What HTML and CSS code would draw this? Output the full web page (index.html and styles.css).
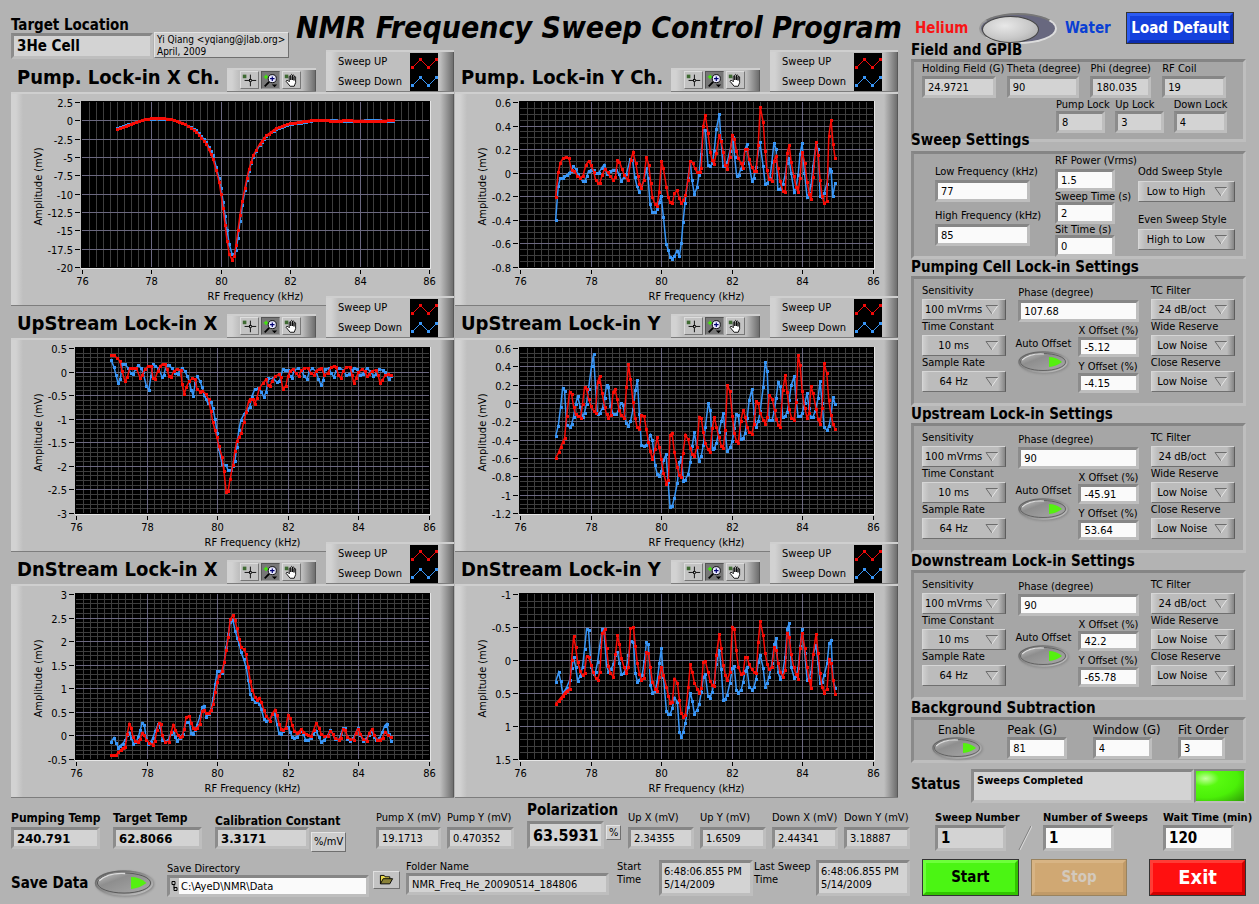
FILE: index.html
```html
<!DOCTYPE html>
<html lang="en">
<head>
<meta charset="utf-8">
<title>NMR Frequency Sweep Control Program</title>
<link rel="stylesheet" href="styles.css">
</head>
<body>
<svg class="defs" width="0" height="0" aria-hidden="true">
  <defs>
    <linearGradient id="ledFace" x1="0" y1="0" x2="1" y2="1">
      <stop offset="0" stop-color="#c4c4c4"/><stop offset=".35" stop-color="#8e8e8e"/><stop offset="1" stop-color="#a8a8a8"/>
    </linearGradient>
    <linearGradient id="ledRim" x1="0" y1="0" x2="1" y2="1">
      <stop offset="0" stop-color="#555"/><stop offset="1" stop-color="#c8c8c8"/>
    </linearGradient>
  </defs>
  <symbol id="i-cross" viewBox="0 0 19 16">
    <rect x="2" y="2" width="4" height="4" fill="#3f6a33"/>
    <path d="M10.5 2v5M10.5 10v5M4 8.500h5M12 8.500h5" stroke="#000" fill="none"/>
    <rect x="9.500" y="7.500" width="2" height="2" fill="#fff" stroke="#000"/>
  </symbol>
  <symbol id="i-zoom" viewBox="0 0 19 16">
    <path d="M4.500 2v5M2 4.500h5" stroke="#3df000" stroke-width="1.500"/>
    <circle cx="11.500" cy="6.500" r="4.500" fill="#e8e8ff" stroke="#000"/>
    <path d="M11.500 4v5M9 6.500h5" stroke="#000070" stroke-width="1.300"/>
    <path d="M8 10l-5 5" stroke="#000" stroke-width="2"/>
    <path d="M11 13h6l-3 3z" fill="#000"/>
  </symbol>
  <symbol id="i-hand" viewBox="0 0 19 16">
    <rect x="2" y="2" width="4" height="4" fill="#3f6a33"/>
    <path d="M8 15L3.500 9.500q0-1.500 2-1L7 10V4q.8-1.500 1.700 0v4V2.500q.9-1.500 1.800 0V8V3q.9-1.300 1.800 0v5.500V4.500q.9-1.200 1.800 0V11L12.500 15z" fill="#fff" stroke="#000"/>
  </symbol>
  <symbol id="i-tri" viewBox="0 0 14 10">
    <path d="M13 .5H1L7 9" fill="none" stroke="#6c6c6c"/>
    <path d="M7 9L13 .5" fill="none" stroke="#e6e6e6"/>
  </symbol>
  <symbol id="i-trace" viewBox="0 0 28 16">
    <path d="M2.500 12.500L10.500 4.500L18.500 12.500L26.500 4.500" fill="none" stroke="currentColor"/>
    <path d="M1 11h3v3H1zM9 3h3v3H9zM17 11h3v3h-3zM25 3h3v3h-3z" fill="currentColor"/>
  </symbol>
  <symbol id="i-led" viewBox="0 0 50 22">
    <ellipse cx="25" cy="11" rx="24" ry="10" fill="#999" stroke="url(#ledRim)" stroke-width="1.500"/>
    <ellipse cx="25" cy="11" rx="22.500" ry="8.500" fill="url(#ledFace)" stroke="#4a4a4a" stroke-width=".7"/>
    <path d="M4 9Q12 2 26 3" stroke="#ddd" stroke-width="1.200" fill="none"/>
    <path d="M31 6Q38 6 44 11Q38 15.500 31 16z" fill="#55f010"/>
  </symbol>
</svg>

<main class="page">
  <div class="left">
    <header class="banner">
      <div class="field target">
        <label class="big" for="target">Target Location</label>
        <input id="target" class="ind strong" value="3He Cell" readonly>
      </div>
      <p class="author">Yi Qiang &lt;yqiang@jlab.org&gt;<br>April, 2009</p>
      <h1>NMR Frequency Sweep Control Program</h1>
    </header>

    <div class="charts">
      <section class="chart">
        <div class="chart-head">
          <h2>Pump. Lock-in X Ch.</h2>
          <div class="palette"><button aria-label="Cursor"><svg><use href="#i-cross"/></svg></button><button class="on" aria-label="Zoom"><svg><use href="#i-zoom"/></svg></button><button aria-label="Pan"><svg><use href="#i-hand"/></svg></button></div>
          <div class="legend"><span>Sweep UP</span><span>Sweep Down</span><div class="keys"><svg class="up"><use href="#i-trace"/></svg><svg class="down"><use href="#i-trace"/></svg></div></div>
        </div>
        <div class="plot" data-chart="pumpX"></div>
      </section>
      <section class="chart">
        <div class="chart-head">
          <h2>Pump. Lock-in Y Ch.</h2>
          <div class="palette"><button aria-label="Cursor"><svg><use href="#i-cross"/></svg></button><button class="on" aria-label="Zoom"><svg><use href="#i-zoom"/></svg></button><button aria-label="Pan"><svg><use href="#i-hand"/></svg></button></div>
          <div class="legend"><span>Sweep UP</span><span>Sweep Down</span><div class="keys"><svg class="up"><use href="#i-trace"/></svg><svg class="down"><use href="#i-trace"/></svg></div></div>
        </div>
        <div class="plot" data-chart="pumpY"></div>
      </section>
      <section class="chart">
        <div class="chart-head">
          <h2>UpStream Lock-in X</h2>
          <div class="palette"><button aria-label="Cursor"><svg><use href="#i-cross"/></svg></button><button class="on" aria-label="Zoom"><svg><use href="#i-zoom"/></svg></button><button aria-label="Pan"><svg><use href="#i-hand"/></svg></button></div>
          <div class="legend"><span>Sweep UP</span><span>Sweep Down</span><div class="keys"><svg class="up"><use href="#i-trace"/></svg><svg class="down"><use href="#i-trace"/></svg></div></div>
        </div>
        <div class="plot" data-chart="upX"></div>
      </section>
      <section class="chart">
        <div class="chart-head">
          <h2>UpStream Lock-in Y</h2>
          <div class="palette"><button aria-label="Cursor"><svg><use href="#i-cross"/></svg></button><button class="on" aria-label="Zoom"><svg><use href="#i-zoom"/></svg></button><button aria-label="Pan"><svg><use href="#i-hand"/></svg></button></div>
          <div class="legend"><span>Sweep UP</span><span>Sweep Down</span><div class="keys"><svg class="up"><use href="#i-trace"/></svg><svg class="down"><use href="#i-trace"/></svg></div></div>
        </div>
        <div class="plot" data-chart="upY"></div>
      </section>
      <section class="chart">
        <div class="chart-head">
          <h2>DnStream Lock-in X</h2>
          <div class="palette"><button aria-label="Cursor"><svg><use href="#i-cross"/></svg></button><button class="on" aria-label="Zoom"><svg><use href="#i-zoom"/></svg></button><button aria-label="Pan"><svg><use href="#i-hand"/></svg></button></div>
          <div class="legend"><span>Sweep UP</span><span>Sweep Down</span><div class="keys"><svg class="up"><use href="#i-trace"/></svg><svg class="down"><use href="#i-trace"/></svg></div></div>
        </div>
        <div class="plot" data-chart="dnX"></div>
      </section>
      <section class="chart">
        <div class="chart-head">
          <h2>DnStream Lock-in Y</h2>
          <div class="palette"><button aria-label="Cursor"><svg><use href="#i-cross"/></svg></button><button class="on" aria-label="Zoom"><svg><use href="#i-zoom"/></svg></button><button aria-label="Pan"><svg><use href="#i-hand"/></svg></button></div>
          <div class="legend"><span>Sweep UP</span><span>Sweep Down</span><div class="keys"><svg class="up"><use href="#i-trace"/></svg><svg class="down"><use href="#i-trace"/></svg></div></div>
        </div>
        <div class="plot" data-chart="dnY"></div>
      </section>
    </div>

    <div class="readouts">
      <div class="field"><label class="mid" for="ptemp">Pumping Temp</label><input id="ptemp" class="ind semi" value="240.791" readonly></div>
      <div class="field"><label class="mid" for="ttemp">Target Temp</label><input id="ttemp" class="ind semi" value="62.8066" readonly></div>
      <div class="with-unit calib">
        <div class="field"><label class="mid" for="calib">Calibration Constant</label><input id="calib" class="ind semi" value="3.3171" readonly></div>
        <span class="unit low">%/mV</span>
      </div>
      <div class="field"><label for="px">Pump X (mV)</label><input id="px" class="ind" value="19.1713" readonly></div>
      <div class="field"><label for="py">Pump Y (mV)</label><input id="py" class="ind" value="0.470352" readonly></div>
      <div class="with-unit polar">
        <div class="field"><label class="big" for="pol">Polarization</label><input id="pol" class="ind huge" value="63.5931" readonly></div>
        <span class="unit">%</span>
      </div>
      <div class="field"><label for="ux">Up X (mV)</label><input id="ux" class="ind" value="2.34355" readonly></div>
      <div class="field"><label for="uy">Up Y (mV)</label><input id="uy" class="ind" value="1.6509" readonly></div>
      <div class="field"><label for="dx">Down X (mV)</label><input id="dx" class="ind" value="2.44341" readonly></div>
      <div class="field"><label for="dy">Down Y (mV)</label><input id="dy" class="ind" value="3.18887" readonly></div>
    </div>

    <div class="saving">
      <div class="save-switch"><span class="big" id="saveLbl">Save Data</span><button class="led large" aria-labelledby="saveLbl" aria-pressed="true"><svg><use href="#i-led"/></svg></button></div>
      <div class="save-dir">
        <div class="field"><label for="dir">Save Directory</label>
          <div class="path"><svg class="path-mark" viewBox="0 0 6 10"><path d="M.5 .5h3v3h-3zM2.500 4v3h1M2.500 6.500h3v3h-3z" fill="none" stroke="#000"/></svg><input id="dir" value="C:\AyeD\NMR\Data"></div>
        </div>
        <button class="browse" aria-label="Browse"><svg viewBox="0 0 16 12"><path d="M1.500 10.500v-9h4l1 1.500h5v2" fill="#e8d84a" stroke="#000"/><path d="M1.500 10.500l3-5.500h10l-3 5.500z" fill="#8a8238" stroke="#000"/></svg></button>
      </div>
      <div class="field folder"><label for="folder">Folder Name</label><input id="folder" class="ind" value="NMR_Freq_He_20090514_184806" readonly></div>
      <div class="stamp"><span>Start<br>Time</span><output>6:48:06.855 PM<br>5/14/2009</output></div>
      <div class="stamp last"><span>Last Sweep<br>Time</span><output>6:48:06.855 PM<br>5/14/2009</output></div>
    </div>
  </div>

  <div class="right">
    <div class="topbar">
      <label class="big he" for="gas">Helium</label>
      <input id="gas" class="toggle" type="checkbox">
      <label class="big wa" for="gas">Water</label>
      <button class="btn blue">Load Default</button>
    </div>

    <section class="group gpib">
      <h3>Field and GPIB</h3>
      <div class="panel">
        <div class="row first">
          <div class="field"><label for="hf">Holding Field (G)</label><input id="hf" class="ind" value="24.9721" readonly></div>
          <div class="field"><label for="th">Theta (degree)</label><input id="th" class="ind" value="90" readonly></div>
          <div class="field"><label for="ph">Phi (degree)</label><input id="ph" class="ind" value="180.035" readonly></div>
          <div class="field"><label for="rf">RF Coil</label><input id="rf" class="ind" value="19" readonly></div>
        </div>
        <div class="row second">
          <div class="field"><label for="pl">Pump Lock</label><input id="pl" class="ind" value="8" readonly></div>
          <div class="field"><label for="ul">Up Lock</label><input id="ul" class="ind" value="3" readonly></div>
          <div class="field"><label for="dl">Down Lock</label><input id="dl" class="ind" value="4" readonly></div>
        </div>
      </div>
    </section>

    <section class="group sweep">
      <h3>Sweep Settings</h3>
      <div class="panel">
        <div class="col freq">
          <div class="field"><label for="lf">Low Frequency (kHz)</label><input id="lf" value="77"></div>
          <div class="field"><label for="hfq">High Frequency (kHz)</label><input id="hfq" value="85"></div>
        </div>
        <div class="col times">
          <div class="field"><label for="rp">RF Power (Vrms)</label><input id="rp" value="1.5"></div>
          <div class="field"><label for="st">Sweep Time (s)</label><input id="st" value="2"></div>
          <div class="field"><label for="si">Sit Time (s)</label><input id="si" value="0"></div>
        </div>
        <div class="col styles">
          <div class="field"><label for="os">Odd Sweep Style</label><span class="pick"><select id="os"><option>Low to High</option></select><svg><use href="#i-tri"/></svg></span></div>
          <div class="field"><label for="es">Even Sweep Style</label><span class="pick"><select id="es"><option>High to Low</option></select><svg><use href="#i-tri"/></svg></span></div>
        </div>
      </div>
    </section>

    <section class="group lockin">
      <h3>Pumping Cell Lock-in Settings</h3>
      <div class="panel">
        <div class="col">
          <div class="field"><label for="p1">Sensitivity</label><span class="pick"><select id="p1"><option>100 mVrms</option></select><svg><use href="#i-tri"/></svg></span></div>
          <div class="field"><label for="p2">Time Constant</label><span class="pick"><select id="p2"><option>10 ms</option></select><svg><use href="#i-tri"/></svg></span></div>
          <div class="field"><label for="p3">Sample Rate</label><span class="pick"><select id="p3"><option>64 Hz</option></select><svg><use href="#i-tri"/></svg></span></div>
        </div>
        <div class="middle">
          <div class="field phase"><label for="p4">Phase (degree)</label><input id="p4" value="107.68"></div>
          <div class="auto"><span id="pa">Auto Offset</span><button class="led" aria-labelledby="pa" aria-pressed="true"><svg><use href="#i-led"/></svg></button></div>
          <div class="offsets">
            <div class="field"><label for="p5">X Offset (%)</label><input id="p5" value="-5.12"></div>
            <div class="field"><label for="p6">Y Offset (%)</label><input id="p6" value="-4.15"></div>
          </div>
        </div>
        <div class="col">
          <div class="field"><label for="p7">TC Filter</label><span class="pick"><select id="p7"><option>24 dB/oct</option></select><svg><use href="#i-tri"/></svg></span></div>
          <div class="field"><label for="p8">Wide Reserve</label><span class="pick"><select id="p8"><option>Low Noise</option></select><svg><use href="#i-tri"/></svg></span></div>
          <div class="field"><label for="p9">Close Reserve</label><span class="pick"><select id="p9"><option>Low Noise</option></select><svg><use href="#i-tri"/></svg></span></div>
        </div>
      </div>
    </section>

    <section class="group lockin">
      <h3>Upstream Lock-in Settings</h3>
      <div class="panel">
        <div class="col">
          <div class="field"><label for="u1">Sensitivity</label><span class="pick"><select id="u1"><option>100 mVrms</option></select><svg><use href="#i-tri"/></svg></span></div>
          <div class="field"><label for="u2">Time Constant</label><span class="pick"><select id="u2"><option>10 ms</option></select><svg><use href="#i-tri"/></svg></span></div>
          <div class="field"><label for="u3">Sample Rate</label><span class="pick"><select id="u3"><option>64 Hz</option></select><svg><use href="#i-tri"/></svg></span></div>
        </div>
        <div class="middle">
          <div class="field phase"><label for="u4">Phase (degree)</label><input id="u4" value="90"></div>
          <div class="auto"><span id="ua">Auto Offset</span><button class="led" aria-labelledby="ua" aria-pressed="true"><svg><use href="#i-led"/></svg></button></div>
          <div class="offsets">
            <div class="field"><label for="u5">X Offset (%)</label><input id="u5" value="-45.91"></div>
            <div class="field"><label for="u6">Y Offset (%)</label><input id="u6" value="53.64"></div>
          </div>
        </div>
        <div class="col">
          <div class="field"><label for="u7">TC Filter</label><span class="pick"><select id="u7"><option>24 dB/oct</option></select><svg><use href="#i-tri"/></svg></span></div>
          <div class="field"><label for="u8">Wide Reserve</label><span class="pick"><select id="u8"><option>Low Noise</option></select><svg><use href="#i-tri"/></svg></span></div>
          <div class="field"><label for="u9">Close Reserve</label><span class="pick"><select id="u9"><option>Low Noise</option></select><svg><use href="#i-tri"/></svg></span></div>
        </div>
      </div>
    </section>

    <section class="group lockin">
      <h3>Downstream Lock-in Settings</h3>
      <div class="panel">
        <div class="col">
          <div class="field"><label for="d1">Sensitivity</label><span class="pick"><select id="d1"><option>100 mVrms</option></select><svg><use href="#i-tri"/></svg></span></div>
          <div class="field"><label for="d2">Time Constant</label><span class="pick"><select id="d2"><option>10 ms</option></select><svg><use href="#i-tri"/></svg></span></div>
          <div class="field"><label for="d3">Sample Rate</label><span class="pick"><select id="d3"><option>64 Hz</option></select><svg><use href="#i-tri"/></svg></span></div>
        </div>
        <div class="middle">
          <div class="field phase"><label for="d4">Phase (degree)</label><input id="d4" value="90"></div>
          <div class="auto"><span id="da">Auto Offset</span><button class="led" aria-labelledby="da" aria-pressed="true"><svg><use href="#i-led"/></svg></button></div>
          <div class="offsets">
            <div class="field"><label for="d5">X Offset (%)</label><input id="d5" value="42.2"></div>
            <div class="field"><label for="d6">Y Offset (%)</label><input id="d6" value="-65.78"></div>
          </div>
        </div>
        <div class="col">
          <div class="field"><label for="d7">TC Filter</label><span class="pick"><select id="d7"><option>24 dB/oct</option></select><svg><use href="#i-tri"/></svg></span></div>
          <div class="field"><label for="d8">Wide Reserve</label><span class="pick"><select id="d8"><option>Low Noise</option></select><svg><use href="#i-tri"/></svg></span></div>
          <div class="field"><label for="d9">Close Reserve</label><span class="pick"><select id="d9"><option>Low Noise</option></select><svg><use href="#i-tri"/></svg></span></div>
        </div>
      </div>
    </section>

    <section class="group backg">
      <h3>Background Subtraction</h3>
      <div class="panel">
        <div class="auto"><span id="en" class="enable">Enable</span><button class="led" aria-labelledby="en" aria-pressed="true"><svg><use href="#i-led"/></svg></button></div>
        <div class="field"><label class="wide" for="pk">Peak (G)</label><input id="pk" value="81"></div>
        <div class="field"><label class="wide" for="wi">Window (G)</label><input id="wi" value="4"></div>
        <div class="field"><label class="wide" for="fo">Fit Order</label><input id="fo" value="3"></div>
      </div>
    </section>

    <div class="status">
      <label class="big" for="stat">Status</label>
      <output id="stat">Sweeps Completed</output>
      <span class="lamp"></span>
    </div>

    <div class="counts">
      <div class="field"><label class="bold" for="sn">Sweep Number</label><input id="sn" class="ind strong" value="1" readonly></div>
      <svg class="slash" viewBox="0 0 14 26"><path d="M1 25L13 1" stroke="#777"/><path d="M2 25L14 1" stroke="#ddd"/></svg>
      <div class="field"><label class="bold" for="ns">Number of Sweeps</label><input id="ns" class="strong" value="1"></div>
      <div class="field wait"><label class="bold" for="wt">Wait Time (min)</label><input id="wt" class="strong" value="120"></div>
    </div>

    <div class="actions">
      <button class="btn green">Start</button>
      <button class="btn tan" disabled>Stop</button>
      <button class="btn red">Exit</button>
    </div>
  </div>
</main>
<script src="charts.js"></script>
</body>
</html>
```
FILE: styles.css
```css
* { box-sizing: border-box; }
body {
  margin: 0;
  background: #b3b3b3;
  color: #000;
  font: 11px/15px "DejaVu Sans Condensed", "Noto Sans", sans-serif;
}
h1, h2, h3, p { margin: 0; }
h1, h2, h3, label, span { white-space: nowrap; }
input, select, button { font: inherit; color: inherit; margin: 0; border-radius: 0; }
button { padding: 0; cursor: pointer; }
svg { display: block; }
.defs { position: absolute; }

.page {
  display: grid;
  grid-template-columns: minmax(0, 910fr) minmax(0, 349fr);
  min-height: 100vh;
}
.left { padding-left: 11px; min-width: 0; }
.right { padding: 12px 13px 0 1px; min-width: 0; }

/* fields */
.field { display: flex; flex-direction: column; min-width: 0; }
.field input, .path, .stamp output, .status output {
  flex: none;
  width: 100%;
  height: 22px;
  padding: 0 0 0 3px;
  background: #fafafa;
  border: 3px solid;
  border-color: #868686 #bebebe #bebebe #8c8c8c;
  outline: 0;
}
.field input.ind, .stamp output, .status output { background: #d3d3d3; }
.field input.strong { font-size: 15px; font-weight: bold; height: 26px; }
.field input.semi { font-size: 13px; font-weight: bold; }
.field input.huge { font-size: 16px; font-weight: bold; height: 28px; }
.big { font-size: 15px; font-weight: bold; line-height: 18px; }
.mid { font-size: 12px; font-weight: bold; line-height: 16px; }
.bold { font-weight: bold; }
.wide { font-size: 13px; }

/* banner */
.banner { display: flex; height: 50px; padding-top: 16px; }
.target { flex: 0 0 142px; }
.target label { height: 17px; }
.author {
  flex: 0 0 135px;
  height: 26px;
  margin: 16px 0 0 1px;
  padding: 1px 2px;
  border: 1px solid;
  border-color: #e4e4e4 #6f6f6f #6f6f6f #e4e4e4;
  background: #cdcdcd;
  font-size: 10px;
  line-height: 12px;
  white-space: nowrap;
}
h1 { flex: 1; margin: -5px 0 0 7px; font-size: 30px; line-height: 34px; font-style: italic; }

/* charts */
.charts {
  display: grid;
  grid-template-columns: repeat(2, minmax(0, 1fr));
  gap: 0 1px;
  margin-right: 12px;
}
.chart { margin-bottom: -10px; }
.chart-head { display: flex; height: 42px; align-items: flex-end; }
.chart-head h2 { flex: 1; padding-left: 6px; font-size: 20px; line-height: 30px; }
.palette, .legend, .plot {
  background: linear-gradient(to right, #d2d2d2 0, #d2d2d2 5px, #bfbfbf 12px, #bfbfbf calc(100% - 14px), #6e6e6e calc(100% - 1px), #444 100%);
  border-top: 2px solid #cfcfcf;
  border-bottom: 1px solid #7d7d7d;
}
.palette { display: flex; flex: 0 0 89px; height: 24px; padding: 1px 0 0 13px; gap: 2px; }
.palette button {
  width: 19px;
  height: 18px;
  border: 1px solid;
  border-color: #ddd #777 #777 #ddd;
  background: #c3c3c3;
}
.palette button.on { background: #777; border-color: #555 #999 #999 #555; }
.palette svg { width: 17px; height: 16px; }
.legend {
  display: grid;
  flex: 0 0 128px;
  grid-template-columns: 1fr 28px;
  height: 42px;
  margin-left: 10px;
  padding: 0 16px 0 12px;
  align-items: center;
}
.keys { grid-column: 2; grid-row: 1 / span 2; background: #000; height: 38px; padding: 1px 0; }
.keys svg { width: 28px; height: 18px; }
.up { color: #f00a0a; }
.down { color: #3996f7; }
.plot { height: 214px; }
.plot text { font-size: 11px; fill: #000; }

/* readouts */
.readouts {
  display: grid;
  grid-template-columns: 102fr 102fr 161fr 71fr 80fr 101fr 72fr 72fr 72fr 66fr;
  align-items: end;
  margin-top: 12px;
  height: 49px;
}
.readouts > .field { padding-right: 6px; }
.readouts > .field:nth-child(-n+2), .readouts > .field:nth-child(5) { padding-right: 13px; }
.readouts > .field:last-child { padding-right: 0; }
.readouts > .field label { height: 17px; }
.readouts .calib label { line-height: 12px; }
.with-unit { display: flex; gap: 2px; }
.calib .field { flex: 0 0 94px; }
.polar .field { flex: 0 0 77px; }
.polar label { height: 20px; }
.unit {
  align-self: center;
  margin-top: 14px;
  padding: 0 2px;
  border: 1px solid;
  border-color: #e4e4e4 #6f6f6f #6f6f6f #e4e4e4;
  background: #cdcdcd;
  line-height: 13px;
}
.unit.low { align-self: flex-end; margin-bottom: -3px; line-height: 18px; }

.saving {
  display: grid;
  grid-template-columns: 156fr 239fr 211fr 136fr 157fr;
  margin-top: 11px;
  height: 37px;
}
.save-switch { display: flex; align-items: center; gap: 6px; padding-top: 9px; }
.save-dir { display: flex; gap: 4px; align-items: flex-end; padding-right: 6px; }
.save-dir .field { flex: 1; }
.saving .field label { line-height: 13px; }
.path { display: flex; align-items: center; padding: 0; background: #bfbfbf; }
.path-mark { flex: 0 0 9px; height: 10px; width: 6px; }
.field .path input { flex: 1; border: 0; height: 16px; padding-left: 2px; }
.browse {
  align-self: flex-end;
  width: 27px;
  height: 18px;
  margin-bottom: 8px;
  padding: 2px 5px;
  border: 1px solid;
  border-color: #e0e0e0 #707070 #707070 #e0e0e0;
  background: #c3c3c3;
}
.folder { padding-right: 8px; }
.stamp { display: flex; justify-content: space-between; line-height: 13px; }
.stamp output { flex: 0 0 94px; height: 36px; padding: 2px 0 0 2px; white-space: nowrap; }
.stamp.last { padding-left: 1px; }

/* round push buttons */
.led { width: 50px; height: 22px; border: 0; background: none; filter: drop-shadow(1px 1px 1px #888); }
.led svg { width: 100%; height: 100%; }
.led.large { width: 60px; height: 26px; }

/* top bar */
.topbar { display: flex; align-items: center; height: 32px; padding: 0 12px 0 4px; }
.he { color: #f81414; flex: 0 0 64px; }
.wa { color: #0a3fd4; flex: 1; padding-left: 8px; }
.toggle {
  appearance: none;
  width: 78px;
  height: 31px;
  border: 2px solid;
  border-color: #777 #ddd #ddd #999;
  border-radius: 50%;
  background: #68687f;
}
.toggle::before {
  content: "";
  display: block;
  width: 55px;
  height: 25px;
  margin: 1px 0 0 1px;
  border: 1px solid #444;
  border-radius: 50%;
  background: radial-gradient(ellipse at 40% 35%, #e8e8e8, #c8c8c8 55%, #a0a0a0);
}
.btn { border: 4px solid; outline: 1px solid #333; outline-offset: -1px; font-weight: bold; font-size: 15px; white-space: nowrap; }
.blue { width: 108px; height: 32px; color: #fff; background: #1541dd; border-color: #2c5bf2 #0b2cb0 #0b2cb0 #2c5bf2; }
.green { background: #4bf513; border-color: #6dff3a #32c400 #32c400 #6dff3a; }
.tan { background: #d0a873; border-color: #d8b484 #c09a68 #c09a68 #d8b484; color: #d3c9bc; outline-color: #99835f; }
.red { background: #ff1010; border-color: #ff3d36 #d00000 #d00000 #ff3d36; color: #fff; font-size: 20px; }

/* settings groups */
h3 { font-size: 15px; line-height: 17px; position: relative; }
.panel {
  border: 3px solid;
  border-color: #858585 #bebebe #bebebe #8a8a8a;
  background: #a6a6a6;
}
.gpib { margin-top: -2px; }
.gpib .panel { height: 83px; padding: 0 6px 0 8px; }
.row { display: grid; }
.row label { line-height: 13px; }
.gpib .first { grid-template-columns: 85fr 84fr 72fr 75fr; }
.gpib .first .field { padding-right: 11px; }
.gpib .first label { height: 14px; }
.gpib .second { grid-template-columns: 59fr 58fr 63fr; padding-left: 134px; }
.gpib .second .field { padding-right: 10px; }
.sweep { margin-top: -10px; }
.sweep .panel { display: flex; justify-content: space-between; margin-top: 2px; height: 108px; padding: 0 8px 0 21px; }
.freq { width: 96px; padding-top: 10px; display: grid; align-content: start; gap: 6px; }
.freq label { height: 16px; }
.times { width: 60px; margin-left: 25px; }
.times label { line-height: 12px; height: 11px; }
.times label[for="rp"] { height: 15px; line-height: 14px; }
.styles { width: 98px; margin-left: 23px; padding-top: 10px; display: grid; align-content: start; gap: 10px; }
.styles label { height: 17px; }

.pick { display: grid; grid-template-columns: 1fr 14px 7px; align-items: center; }
.pick select {
  grid-area: 1 / 1 / 2 / 4;
  width: 100%;
  height: 21px;
  appearance: none;
  padding: 0 21px 0 0;
  text-align: center;
  text-align-last: center;
  border: 1px solid;
  border-color: #d6d6d6 #5d5d5d #6f6f6f #d6d6d6;
  background: linear-gradient(to right, #cfcfcf, #bcbcbc 6px, #bcbcbc calc(100% - 7px), #858585);
}
.pick svg { grid-area: 1 / 2; width: 14px; height: 10px; pointer-events: none; }

.lockin .panel { display: grid; grid-template-columns: 84fr 144fr 84fr; height: 130px; padding: 5px 8px 0 8px; }
.lockin .col label { line-height: 13px; height: 15px; }
.middle { display: grid; grid-template-columns: 64fr 60fr; padding: 0 12px 0 8px; align-content: start; }
.phase { grid-column: 1 / 3; padding: 2px 0 0 4px; }
.phase label { line-height: 14px; }
.auto { display: flex; flex-direction: column; align-items: center; padding-top: 14px; }
.lockin .auto { padding-right: 6px; }
.offsets { padding-top: 2px; display: grid; gap: 3px; align-content: start; }
.offsets label { line-height: 13px; }
.offsets .field input { height: 20px; }

.backg .panel { display: grid; grid-template-columns: 84fr 84fr 84fr 64fr; height: 46px; padding: 2px 0 0 8px; }
.backg .auto { align-items: flex-start; padding: 2px 0 0 10px; }
.enable { padding-left: 6px; font-size: 12px; line-height: 13px; }
.backg .field { padding-right: 26px; }
.backg .field:last-child { padding-right: 18px; }

.status { display: flex; align-items: stretch; margin-top: 6px; height: 34px; }
.status label { flex: 0 0 60px; line-height: 30px; }
.status output { flex: 1; height: auto; font-weight: bold; line-height: 17px; }
.lamp {
  flex: 0 0 52px;
  border: 2px solid;
  border-color: #868686 #bebebe #bebebe #868686;
  background: radial-gradient(ellipse at 20% 25%, #c4ff9e, #58fa10 25%, #4bf008 60%, #2f9c06);
}

.counts { display: grid; grid-template-columns: 71fr 37fr 71fr 49fr 71fr 12fr; padding-left: 24px; margin-top: 7px; align-items: end; }
.counts .wait { grid-column: 5; }
.slash { width: 14px; height: 26px; justify-self: center; }
.actions { display: grid; grid-template-columns: 97fr 12fr 97fr 22fr 97fr; padding-left: 11px; margin-top: 8px; height: 37px; }
.actions .tan { grid-column: 3; }
.actions .red { grid-column: 5; }
```
FILE: charts.js
```js
// Sampled traces on a fine raster; box gives the raster edges of the plot area
// as [left, top, right, bottom]. ticks run from the top edge to the bottom edge.
const CHARTS = {
  pumpX: {
    left: 71, box: [246, 307, 1289, 800], minor: 0,
    ticks: ["2.5", "0", "-2.5", "-5", "-7.5", "-10", "-12.5", "-15", "-17.5", "-20"],
    up: "352,388 370,383 400,371 435,358 470,354 515,358 555,372 590,396 620,432 640,478 658,545 664,583 670,625 676,674 682,722 688,760 697,778 704,766 709,735 715,690 721,645 728,602 736,563 742,533 748,508 755,485 761,466 780,432 800,407 830,385 870,371 920,364 940,360 1000,363 1040,362 1120,363 1180,362",
    down: "352,385 370,379 400,369 435,359 470,356 515,359 555,373 590,392 620,427 640,466 658,535 664,565 670,605 676,647 682,690 688,730 697,761 704,768 709,748 715,712 721,662 728,615 736,570 742,541 748,513 755,489 761,470 780,436 800,409 830,387 870,373 920,366 940,362 1000,361 1040,365 1120,361 1180,364"
  },
  pumpY: {
    left: 65, box: [210, 307, 1271, 800], minor: 4,
    ticks: ["0.6", "0.4", "0.2", "0", "-0.2", "-0.4", "-0.6", "-0.8"],
    up: "317,592 325,517 331,488 340,474 348,471 357,475 365,511 373,512 382,527 391,533 399,528 408,495 416,484 424,496 432,517 437,539 445,550 450,549 457,525 465,506 473,517 481,529 491,541 497,530 503,481 509,485 516,506 523,524 534,541 543,480 550,457 558,490 564,527 569,551 575,563 582,540 590,471 597,495 603,550 608,592 616,613 622,617 628,577 635,484 641,505 650,560 655,592 661,605 668,610 674,580 682,571 689,594 695,610 701,600 707,586 715,540 722,484 729,488 735,505 742,517 750,517 755,505 760,380 767,346 775,400 782,455 787,480 793,493 800,460 809,406 815,425 821,457 827,495 833,508 840,470 848,406 854,417 860,452 866,475 875,490 880,504 886,448 892,446 899,478 907,502 913,512 920,512 926,436 932,322 941,367 947,452 952,511 959,538 967,544 973,482 980,468 985,505 992,544 1000,572 1007,577 1013,458 1019,436 1025,487 1033,528 1040,560 1046,577 1052,533 1058,455 1066,490 1073,547 1080,583 1085,598 1091,530 1100,428 1106,465 1112,540 1118,588 1124,610 1132,604 1138,408 1145,361 1151,433 1157,475",
    down: "317,661 325,557 331,535 338,535 343,529 352,525 358,518 365,512 370,499 377,507 385,522 391,533 398,544 405,544 411,529 416,513 424,511 432,511 438,519 447,518 456,503 463,494 471,521 481,514 490,509 500,509 508,523 515,544 523,530 530,521 541,478 548,480 555,530 561,557 568,577 575,560 583,540 590,505 595,535 601,613 607,635 616,637 623,628 629,605 634,587 641,650 649,731 655,748 661,769 668,775 674,767 682,751 689,767 695,727 700,667 706,610 715,533 722,484 727,540 734,583 742,562 748,525 754,462 761,390 767,391 775,496 782,499 788,490 794,452 800,388 809,344 814,420 820,499 827,497 833,485 841,452 850,412 855,470 861,527 867,525 874,508 881,490 886,450 892,433 898,490 907,542 913,533 920,500 931,427 941,499 947,553 953,549 961,535 967,487 973,430 980,448 985,568 991,566 1000,553 1006,530 1012,490 1018,473 1025,520 1034,577 1040,562 1046,525 1052,462 1058,430 1065,520 1073,592 1079,580 1085,555 1091,497 1100,430 1106,448 1112,587 1118,592 1124,580 1132,552 1141,506 1145,512 1150,589 1157,550"
  },
  upX: {
    left: 65, box: [229, 145, 1289, 638], minor: 5,
    ticks: ["0.5", "0", "-0.5", "-1", "-1.5", "-2", "-2.5", "-3"],
    up: "334,166 343,166 352,175 361,184 367,214 376,245 383,233 390,206 400,205 410,205 422,236 428,225 436,208 446,199 455,200 460,235 466,238 474,215 482,198 489,193 495,193 502,208 508,228 515,232 522,215 532,208 543,212 548,253 554,283 560,262 569,244 578,236 587,238 592,268 601,275 608,272 619,283 627,298 634,334 640,367 646,389 652,412 658,439 668,472 673,512 680,575 686,572 692,535 700,494 706,454 712,422 718,412 725,400 733,365 740,335 748,302 752,298 760,298 766,313 772,295 779,266 790,250 799,239 805,256 811,259 818,243 827,229 838,224 844,232 850,268 859,258 865,230 872,213 880,208 889,220 898,230 905,212 915,205 925,205 934,220 944,226 950,213 958,207 966,206 975,225 985,220 994,203 1003,199 1010,201 1017,226 1024,235 1031,214 1040,203 1051,201 1058,225 1063,250 1070,235 1076,218 1088,208 1096,215 1103,230 1110,222 1118,213 1130,210 1136,225 1142,250 1149,240 1158,227 1167,222 1175,227",
    down: "334,181 343,202 349,226 355,250 362,238 368,194 377,194 385,205 394,220 400,223 408,208 416,196 424,205 430,216 440,258 448,271 454,230 460,193 467,198 476,206 488,232 493,226 500,196 509,197 518,206 527,219 534,224 540,212 548,205 556,214 563,228 569,245 575,270 581,287 587,250 593,230 601,243 608,262 613,285 619,297 625,310 635,305 640,325 647,358 653,400 658,448 668,492 680,496 686,511 695,510 700,498 706,484 712,442 718,390 724,361 733,343 742,330 751,321 757,290 766,268 776,266 785,275 793,292 800,275 807,236 820,236 833,247 840,244 850,209 865,212 872,230 878,234 884,212 896,206 907,212 914,230 923,238 930,215 938,206 950,214 957,237 965,256 971,242 977,208 988,206 995,220 1003,232 1010,214 1020,204 1030,210 1040,225 1050,224 1057,212 1065,204 1073,207 1082,225 1091,222 1102,206 1112,214 1122,228 1131,222 1140,207 1150,212 1157,217 1168,238 1175,229"
  },
  upY: {
    left: 65, box: [210, 145, 1271, 638], minor: 4,
    ticks: ["0.6", "0.4", "0.2", "0", "-0.2", "-0.4", "-0.6", "-0.8", "-1", "-1.2"],
    up: "317,475 326,457 332,442 338,427 344,414 350,349 359,275 365,283 371,320 377,343 385,349 392,353 398,313 404,263 410,268 416,297 424,319 431,333 437,338 443,248 449,230 457,280 464,320 470,343 476,355 483,345 490,275 496,268 502,298 508,330 515,346 523,355 530,263 536,194 542,238 550,307 556,353 562,382 569,388 575,344 583,349 590,388 596,425 602,454 608,478 616,448 622,412 628,440 635,478 641,517 650,550 656,540 661,405 667,398 674,457 683,502 688,523 694,529 700,460 707,404 715,418 722,445 728,462 734,469 742,440 749,350 755,355 761,397 767,430 775,448 781,457 788,385 794,350 800,380 808,412 815,437 821,443 827,391 833,256 841,274 848,347 854,400 860,422 866,428 874,362 881,329 887,350 893,382 899,397 907,401 913,373 920,304 926,310 932,340 941,359 947,371 953,352 959,286 968,296 975,330 980,356 986,374 992,382 1000,270 1007,227 1013,277 1019,328 1026,353 1034,360 1040,305 1046,167 1052,195 1058,272 1066,325 1073,355 1079,338 1085,260 1091,280 1100,328 1106,358 1112,373 1118,325 1124,191 1132,221 1138,301 1145,346 1151,371 1157,388",
    down: "317,409 325,377 332,322 338,265 344,274 350,374 359,382 365,373 371,350 377,313 383,289 391,320 398,350 404,338 410,313 416,268 425,199 431,164 437,263 443,343 449,340 458,325 464,295 470,257 476,263 482,319 490,343 500,343 508,325 514,310 520,315 529,370 536,377 542,364 550,328 557,271 563,241 569,343 575,436 584,439 590,436 596,420 602,404 608,421 616,496 622,520 629,526 635,513 641,481 649,463 655,545 661,619 668,616 674,592 683,547 689,487 695,472 701,541 707,538 716,520 722,487 728,437 734,397 741,440 748,482 755,467 761,436 767,382 776,310 782,331 789,448 794,445 800,430 808,395 815,364 821,340 827,400 833,454 842,442 848,422 854,385 860,341 866,346 875,418 881,415 887,398 893,355 899,301 907,268 914,340 920,382 926,364 932,334 941,262 947,187 953,214 959,361 968,359 974,335 980,295 986,247 992,259 1000,352 1007,349 1013,335 1019,301 1025,256 1034,230 1040,300 1046,349 1052,349 1058,340 1066,310 1073,280 1079,325 1085,352 1091,350 1098,333 1106,295 1112,244 1118,310 1124,382 1133,391 1139,377 1145,345 1151,292 1157,313"
  },
  dnX: {
    left: 65, box: [229, 162, 1289, 656], minor: 5,
    ticks: ["3", "2.5", "2", "1.5", "1", "0.5", "0", "-0.5"],
    up: "334,643 343,643 350,643 356,636 364,628 370,622 377,619 383,580 389,550 395,562 400,590 407,601 415,604 422,595 428,577 434,585 440,598 448,607 460,613 466,602 472,568 478,548 483,552 488,585 496,604 508,604 515,575 521,553 527,568 535,583 542,590 548,588 554,565 560,530 569,527 575,547 581,562 587,565 593,562 601,550 607,512 613,508 620,519 628,518 635,508 641,490 647,454 653,425 659,408 667,393 674,366 680,331 686,292 692,238 700,226 707,241 712,265 719,297 725,322 733,328 740,343 746,382 752,421 758,448 766,469 772,478 779,472 785,485 793,508 800,527 811,541 818,520 827,508 833,525 839,550 845,565 851,569 859,562 866,524 872,532 878,553 884,571 892,577 898,575 905,566 912,574 920,581 927,585 935,587 943,568 950,548 958,562 966,582 974,587 985,586 992,572 1000,580 1006,594 1018,598 1024,592 1031,566 1037,569 1044,590 1053,596 1063,598 1069,577 1076,566 1083,580 1091,597 1102,601 1109,579 1118,566 1125,585 1133,598 1142,598 1150,592 1157,574 1165,585 1175,590",
    down: "334,604 343,592 349,608 356,622 362,616 369,610 377,600 383,585 389,577 395,592 401,610 410,604 416,590 422,568 428,547 434,553 440,595 446,610 454,606 460,592 467,572 476,550 482,560 488,598 495,602 506,600 513,580 520,574 527,590 533,601 540,592 550,580 560,545 569,544 575,577 581,580 587,570 593,553 602,527 608,499 614,496 620,530 627,522 635,505 641,472 647,430 653,394 660,394 668,400 674,365 680,322 686,283 692,245 700,241 707,273 713,293 719,313 725,337 733,358 740,382 746,418 752,460 758,475 766,484 779,490 785,505 793,535 800,541 811,541 820,520 826,522 832,550 838,577 845,580 852,573 860,560 866,559 872,574 878,590 884,592 894,589 905,572 912,582 918,598 926,598 934,594 942,580 950,572 958,590 965,604 975,598 985,585 992,569 1000,580 1006,597 1018,600 1025,580 1031,562 1038,564 1044,595 1053,601 1062,592 1069,578 1076,562 1083,585 1091,601 1100,596 1108,583 1116,573 1124,590 1130,599 1140,594 1149,575 1156,556 1162,550 1168,580 1175,601"
  },
  dnY: {
    left: 65, box: [210, 162, 1271, 656], minor: 5,
    ticks: ["-1", "-0.5", "0", "0.5", "1", "1.5"],
    up: "317,490 326,481 332,473 338,466 344,457 350,451 359,445 365,361 371,289 377,320 383,365 391,392 398,406 404,400 410,349 416,350 424,374 430,397 437,412 443,419 450,397 457,280 464,268 470,325 476,377 482,400 491,409 497,343 503,286 509,313 515,355 523,382 530,398 536,380 542,265 551,262 557,319 563,370 569,401 575,419 583,412 590,335 596,338 602,382 608,425 616,445 622,452 629,410 635,380 641,404 650,439 656,467 662,487 668,485 674,415 683,427 689,478 694,517 701,529 707,524 716,439 722,373 728,395 734,427 742,445 749,457 755,443 761,365 767,362 775,395 781,421 788,434 794,437 800,346 809,281 815,325 821,376 827,404 833,419 841,397 848,260 854,266 860,331 866,380 874,401 881,398 887,350 893,352 899,373 907,388 914,397 920,400 926,307 932,244 941,286 947,340 953,373 959,388 967,380 974,322 980,331 986,370 992,395 1000,409 1007,391 1013,280 1019,290 1025,343 1033,382 1040,403 1046,415 1052,325 1058,278 1066,325 1073,382 1079,419 1085,442 1091,343 1100,281 1106,340 1112,400 1118,440 1124,457 1133,445 1139,358 1145,370 1151,419 1157,460",
    down: "317,425 326,397 332,422 338,457 344,452 350,442 359,420 365,385 371,352 377,380 383,421 391,408 398,380 404,328 410,268 416,271 424,382 431,403 437,395 443,367 449,322 457,268 463,280 470,376 476,395 483,387 491,373 497,345 503,337 509,368 515,403 523,398 530,380 536,346 543,304 551,307 557,400 563,424 569,420 577,405 584,362 590,307 596,313 602,433 608,457 616,453 622,425 629,368 635,325 641,410 650,511 656,520 662,520 668,503 674,472 683,485 689,575 695,590 701,574 707,547 716,499 722,457 728,482 734,520 742,509 749,490 755,455 761,410 767,403 775,467 781,472 788,454 794,425 800,371 809,331 815,388 821,478 827,475 833,463 841,428 848,385 854,379 860,448 866,457 875,449 881,424 887,392 892,382 899,439 908,449 914,439 920,415 926,367 932,346 941,383 947,439 953,427 959,409 967,370 974,313 980,295 986,397 992,415 1000,395 1007,350 1013,266 1019,250 1025,382 1034,412 1040,407 1046,385 1052,319 1058,266 1066,340 1073,419 1079,413 1085,395 1091,343 1100,316 1106,370 1112,427 1118,425 1124,406 1133,370 1139,310 1145,301 1151,420 1157,442"
  }
};

const TOP = 8, HEIGHT = 165, RIGHT = 25;

function samples(text) {
  const pts = text.split(" ").map(p => p.split(",").map(Number));
  const out = [pts[0]];
  for (let i = 1; i < pts.length; i++) {
    const [ax, ay] = pts[i - 1], [bx, by] = pts[i];
    const n = bx - ax > 13 ? Math.round((bx - ax) / 8) : 1;
    for (let k = 1; k <= n; k++) out.push([ax + (bx - ax) * k / n, ay + (by - ay) * k / n]);
  }
  return out;
}

function draw(host) {
  const c = CHARTS[host.dataset.chart];
  const w = host.clientWidth, left = c.left, pw = w - left - RIGHT, bottom = TOP + HEIGHT;
  const [bl, bt, br, bb] = c.box;
  const px = v => left + (v - bl) / (br - bl) * pw;
  const py = v => TOP + (v - bt) / (bb - bt) * HEIGHT;
  const out = [`<rect x="${left - 1}" y="${TOP - 1}" width="${pw + 3}" height="${HEIGHT + 3}" fill="#e6e6e6"/>`,
    `<rect x="${left - 1}" y="${TOP - 1}" width="${pw + 2}" height="${HEIGHT + 2}" fill="#000"/>`];
  const rows = c.ticks.length - 1;
  let minor = "", major = "", tick = "";
  for (let i = 1; i < 50; i++) {
    const x = Math.round(left + pw * i / 50) + .5;
    if (i % 10) minor += `M${x} ${TOP}V${bottom}`; else major += `M${x} ${TOP}V${bottom}`;
  }
  const sub = c.minor || 1;
  for (let i = 1; i < rows * sub; i++) {
    const y = Math.round(TOP + HEIGHT * i / (rows * sub)) + .5;
    if (i % sub) minor += `M${left} ${y}H${left + pw}`; else major += `M${left} ${y}H${left + pw}`;
  }
  out.push(`<path d="${minor}" stroke="#3e3e3e"/><path d="${major}" stroke="#6b6880"/>`);
  c.ticks.forEach((t, i) => {
    const y = Math.round(TOP + HEIGHT * i / rows) + .5;
    tick += `M${left - 7} ${y}h5`;
    out.push(`<text x="${left - 9}" y="${y + 4}" text-anchor="end">${t}</text>`);
  });
  for (let i = 0; i <= 5; i++) {
    const x = Math.round(left + pw * i / 5) + .5;
    tick += `M${x} ${bottom + 3}v4`;
    out.push(`<text x="${x}" y="${bottom + 18}" text-anchor="middle">${76 + 2 * i}</text>`);
  }
  out.push(`<path d="${tick}" stroke="#000"/>`);
  out.push(`<text x="${left + pw / 2}" y="${bottom + 33}" text-anchor="middle">RF Frequency (kHz)</text>`);
  out.push(`<text transform="translate(31 ${TOP + HEIGHT / 2 + 2}) rotate(-90)" text-anchor="middle">Amplitude (mV)</text>`);
  for (const [key, color] of [["down", "#3996f7"], ["up", "#f80c06"]]) {
    const pts = samples(c[key]).map(([x, y]) => [px(x), py(y)]);
    out.push(`<polyline points="${pts.map(p => p.map(v => v.toFixed(1)).join()).join(" ")}" fill="none" stroke="${color}" stroke-width="1.5"/>`);
    out.push(`<path fill="${color}" shape-rendering="crispEdges" d="${pts.map(([x, y]) => `M${Math.round(x) - 1} ${Math.round(y) - 1}h3v3h-3z`).join("")}"/>`);
  }
  host.innerHTML = `<svg width="${w}" height="211">${out.join("")}</svg>`;
}

const drawAll = () => document.querySelectorAll(".plot").forEach(draw);
drawAll();
addEventListener("resize", drawAll);
```
